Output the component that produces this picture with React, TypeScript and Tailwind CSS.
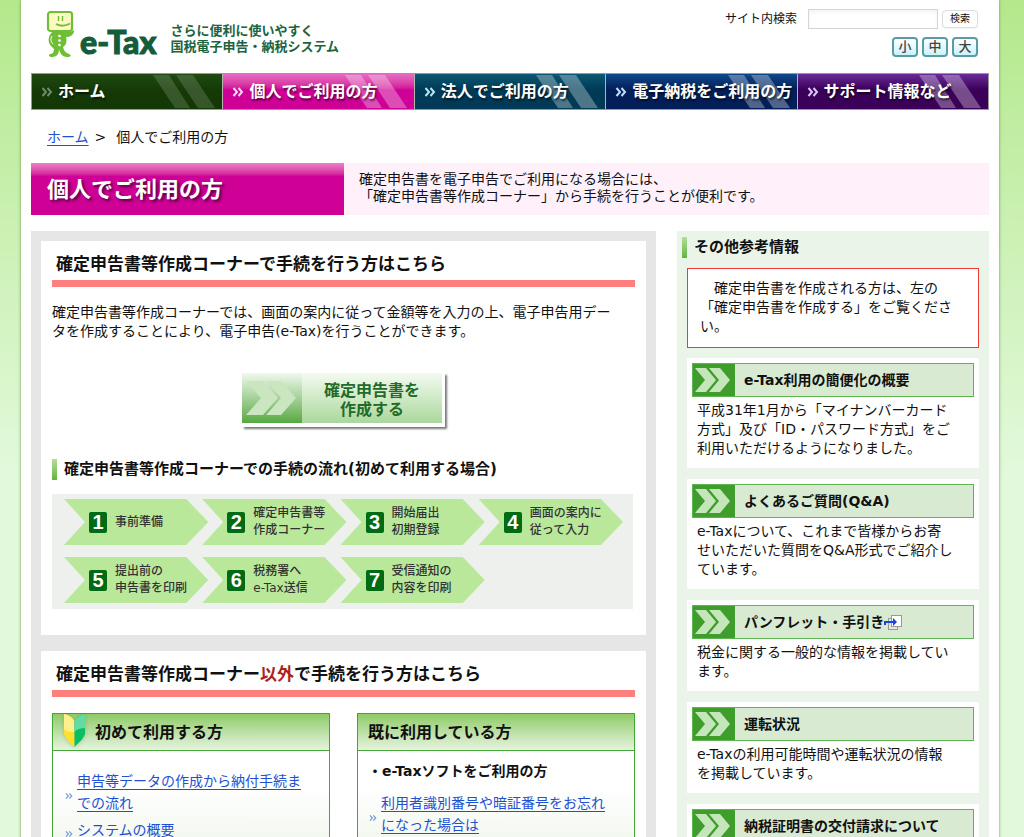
import type { ReactNode } from 'react';

const navItems = [
  { label: 'ホーム', color: 'bg-linear-to-b from-[#1f4a12] from-0% via-[#153a06] via-45% to-[#133805]', arrow: 'text-[#6f8a66]', stripe: 'opacity-15' },
  { label: '個人でご利用の方', color: 'bg-linear-to-b from-[#e66cc4] from-0% via-[#cf0096] via-45% to-[#cf0096]', arrow: 'text-[#ffd9f4]', stripe: 'opacity-30' },
  { label: '法人でご利用の方', color: 'bg-linear-to-b from-[#0d5873] from-0% via-[#003a56] via-45% to-[#003a56]', arrow: 'text-[#b9e6f5]', stripe: 'opacity-30' },
  { label: '電子納税をご利用の方', color: 'bg-linear-to-b from-[#11488c] from-0% via-[#041f57] via-45% to-[#041f57]', arrow: 'text-[#c4dcff]', stripe: 'opacity-30' },
  { label: 'サポート情報など', color: 'bg-linear-to-b from-[#6a2a9a] from-0% via-[#3b0058] via-45% to-[#3b0058]', arrow: 'text-[#d9c4ff]', stripe: 'opacity-30' },
];

const steps = [
  ['事前準備'],
  ['確定申告書等', '作成コーナー'],
  ['開始届出', '初期登録'],
  ['画面の案内に', '従って入力'],
  ['提出前の', '申告書を印刷'],
  ['税務署へ', 'e-Tax送信'],
  ['受信通知の', '内容を印刷'],
];

const infoCards = [
  {
    title: 'e-Tax利用の簡便化の概要',
    text: '平成31年1月から「マイナンバーカード方式」及び「ID・パスワード方式」をご利用いただけるようになりました。',
  },
  {
    title: 'よくあるご質問(Q&A)',
    text: 'e-Taxについて、これまで皆様からお寄せいただいた質問をQ&A形式でご紹介しています。',
  },
  {
    title: 'パンフレット・手引き',
    text: '税金に関する一般的な情報を掲載しています。',
    external: true,
  },
  {
    title: '運転状況',
    text: 'e-Taxの利用可能時間や運転状況の情報を掲載しています。',
  },
  {
    title: '納税証明書の交付請求について',
  },
];

function Mascot() {
  return (
    <svg width="30" height="49" viewBox="0 0 30 49" aria-hidden="true">
      <path
        d="M7 21 C2 26 1 33 6 37 L8 39 C8 43 6 44 4 44 C2 45 3 47 6 47 C11 47 13 44 13 39 C14 44 17 47 21 47 C25 47 26 45 23 44 C20 43 18 41 17 37 C21 35 21 29 20 27 C24 27 27 25 28 22 C29 20 27 20 25 22 L24 19 L22 22 L19 21 Z"
        fill="#6fbe35"
      />
      <path d="M5 24 C1 28 3 34 6 35 C5 30 6 27 8 25 Z" fill="#6fbe35" />
      <path d="M6 26 C4 29 5 32 7 34" fill="none" stroke="#fff" strokeWidth="1" />
      <circle cx="13.500" cy="26" r="1.300" fill="#fff" />
      <circle cx="13.500" cy="30.500" r="1.300" fill="#fff" />
      <circle cx="13.500" cy="35" r="1.300" fill="#fff" />
      <rect x="2" y="2" width="24" height="19" rx="2.500" fill="#fdf8c4" stroke="#6fbe35" strokeWidth="2.200" />
      <path d="M12.500 6 V11 M16.500 6 V11" stroke="#6fbe35" strokeWidth="1.400" />
      <path d="M10 14 C14 16.500 20 16 24 13.500" fill="none" stroke="#6fbe35" strokeWidth="2" />
    </svg>
  );
}

function DoubleAngle({ size }: { size: number }) {
  return (
    <svg width={size} height={size} viewBox="0 0 12 12" fill="none" stroke="currentColor" strokeWidth="2" aria-hidden="true">
      <path d="M1.500 2 L5 6 L1.500 10 M6.500 2 L10 6 L6.500 10" />
    </svg>
  );
}

function Chevrons() {
  return (
    <svg width="42" height="32" viewBox="0 0 42 32" fill="#c5e5bb" aria-hidden="true">
      <path d="M2 4 H13 L23 16 L13 28 H2 L12 16 Z" />
      <path d="M16 4 H27 L37 16 L27 28 H16 L26 16 Z" />
    </svg>
  );
}

function NewWindowIcon() {
  return (
    <svg width="18" height="15" viewBox="0 0 18 15" aria-hidden="true">
      <rect x="4.500" y="3.500" width="9" height="11" fill="#e6e6e6" stroke="#999" />
      <rect x="7.500" y="0.500" width="10" height="11" fill="#fff" stroke="#999" />
      <path d="M1 10 V7 H10" fill="none" stroke="#1747d8" strokeWidth="2" />
      <path d="M9 3 L13 7 L9 11 Z" fill="#1747d8" />
    </svg>
  );
}

function BeginnerMark() {
  return (
    <svg width="24" height="36" viewBox="0 0 24 36" className="drop-shadow-sm" aria-hidden="true">
      <path d="M1 0 C6 1 11 4 11.500 9 V33 C8 29 3 26 1 20 Z" fill="#ffe02c" />
      <path d="M1 0 C6 1 11 4 11.500 9 V18 C8 18 4 18 1 15 Z" fill="#fff08c" />
      <path d="M22 0 C17 1 12 4 11.500 9 V33 C15 29 20 26 22 20 Z" fill="#0abf62" />
      <path d="M22 0 C17 1 12 4 11.500 9 V18 C14 15 18 14 22 14 Z" fill="#63dba4" />
    </svg>
  );
}

function SectionTitle({ children }: { children: ReactNode }) {
  return (
    <h2 className="border-b-[7px] border-[#ff7e7e] pt-[2px] pl-1 pb-[3px] text-[17px] leading-[26px] font-bold">{children}</h2>
  );
}

function LinkItem({ children }: { children: ReactNode }) {
  return (
    <li className="flex items-center gap-1">
      <span className="mt-2 w-2 shrink-0 text-[#7d9ee0]">
        <DoubleAngle size={8} />
      </span>
      <a href="#" className="text-[#1e50d0] underline underline-offset-3">
        {children}
      </a>
    </li>
  );
}

export default function App() {
  return (
    <div className="min-h-screen bg-[#e3f9dc] bg-linear-to-b from-[#b4e88b] to-[#e3f9dc] to-[480px] pl-[21px] pr-[25px] font-['DejaVu_Sans','Noto_Sans_CJK_JP',sans-serif] text-[14px] leading-[19px] text-[#111]">
      <div className="min-h-screen bg-white px-[10px] shadow-[0_0_3px_#6a9a50]">
        <header className="flex h-[73px] items-start justify-between pr-[11px] pl-[15px]">
          <div className="flex pt-[10px]">
            <Mascot />
            <span className="mt-[14px] ml-1 font-['Lato'] text-[32px] leading-9 font-black text-[#155c38] [-webkit-text-stroke:1px_#155c38]">
              e-Tax
            </span>
            <p className="mt-[13px] ml-[14px] text-[13px] leading-4 font-bold text-[#1d6340]">
              さらに便利に使いやすく
              <br />
              国税電子申告・納税システム
            </p>
          </div>
          <div className="flex flex-col items-end pt-[9px]">
            <form className="flex items-center">
              <label htmlFor="site-search" className="mr-[11px] text-[12px]">
                サイト内検索
              </label>
              <input id="site-search" type="text" className="h-[20px] w-[130px] border border-[#d5d5d5] bg-white px-1 text-[12px] shadow-inner" />
              <button type="button" className="ml-1 h-[18px] w-9 rounded border border-[#ddd] bg-white text-[10px] leading-4 shadow-xs">
                検索
              </button>
            </form>
            <div className="mt-2 flex gap-1">
              {['小', '中', '大'].map((size) => (
                <button
                  key={size}
                  type="button"
                  className="h-5 w-[26px] rounded border-2 border-[#5a9ba5] bg-linear-to-b from-white to-[#c8f3fb] text-[13px] leading-4 font-medium text-[#444]"
                >
                  {size}
                </button>
              ))}
            </div>
          </div>
        </header>

        <nav className="grid grid-cols-5 gap-px border border-[#999] bg-[#b5b5b5]">
          {navItems.map((item) => (
            <a
              key={item.label}
              href="#"
              className={`relative flex h-[35px] items-center text-[16px] font-bold whitespace-nowrap text-white ${item.color}`}
            >
              <svg className={`absolute right-0 h-full ${item.stripe}`} width="72" height="35" viewBox="0 0 72 35" fill="#fff" aria-hidden="true">
                <path d="M3 1 H19 L40 34 H25 Z M26 1 H43 L65 34 H48 Z" />
              </svg>
              <span className={`relative ml-[9px] w-[17px] ${item.arrow}`}>
                <DoubleAngle size={12} />
              </span>
              <span className="relative [text-shadow:1px_2px_2px_#0009]">{item.label}</span>
            </a>
          ))}
        </nav>

        <div className="flex gap-[6px] pt-[18px] pb-4 pl-4">
          <a href="#" className="text-[#1e50d0] underline underline-offset-3">
            ホーム
          </a>
          <span>&gt;</span>
          <span className="ml-1">個人でご利用の方</span>
        </div>

        <div className="flex h-[52px] items-stretch bg-[#fff0fa]">
          <h1 className="flex w-[313px] shrink-0 items-center bg-linear-to-b from-[#eb7fcb] from-0% via-[#cf0096] via-25% to-[#cf0096] pl-4 text-[22px] font-bold text-white [text-shadow:2px_2px_3px_#0009]">
            個人でご利用の方
          </h1>
          <p className="pt-2 pl-[15px] leading-[17px]">
            確定申告書を電子申告でご利用になる場合には、
            <br />
            「確定申告書等作成コーナー」から手続を行うことが便利です。
          </p>
        </div>

        <div className="mt-4 flex items-stretch gap-[21px]">
          <main className="flex min-w-0 flex-1 flex-col gap-4 bg-[#e6e6e6] p-[10px]">
            <section className="bg-white px-[11px] pt-2 pb-[26px]">
              <SectionTitle>確定申告書等作成コーナーで手続を行う方はこちら</SectionTitle>
              <p className="mt-4 pr-4">
                確定申告書等作成コーナーでは、画面の案内に従って金額等を入力の上、電子申告用データを作成することにより、電子申告(e-Tax)を行うことができます。
              </p>
              <a
                href="#"
                className="mx-auto mt-8 flex h-[54px] w-[203px] border-r-3 border-b-4 border-white bg-linear-to-b from-[#f3faf0] to-[#abd89c] shadow-[2px_2px_2px_#777]"
              >
                <span className="flex w-[60px] shrink-0 items-center justify-center bg-linear-to-b from-[#f0f8ed] to-[#56a840]">
                  <svg width="54" height="36" viewBox="0 0 54 36" fill="#c9e6c0" aria-hidden="true">
                    <path d="M1 1 H18 L33 18 L18 35 H1 L16 18 Z" />
                    <path d="M21 1 H36 L51 18 L36 35 H21 L36 18 Z" />
                  </svg>
                </span>
                <span className="flex-1 pt-2 text-center text-[16px] leading-[19px] font-bold text-[#236b28]">
                  確定申告書を
                  <br />
                  作成する
                </span>
              </a>
              <h3 className="mt-8 flex h-[21px] items-center gap-[7px] text-[15px] font-bold">
                <span className="h-full w-[5px] bg-linear-to-b from-[#b4dd9a] to-[#62b53a]" />
                確定申告書等作成コーナーでの手続の流れ(初めて利用する場合)
              </h3>
              <ol className="mt-[14px] mr-[2px] grid grid-cols-4 gap-y-3 bg-[#eef0ed] pt-[5px] pr-4 pb-[6px] pl-3">
                {steps.map((lines, i) => (
                  <li
                    key={lines[0]}
                    className="-mr-[6px] flex h-[46px] items-center gap-2 bg-[#b9e89a] pl-[25px] text-[12px] leading-[17px] font-medium whitespace-nowrap text-[#333] [clip-path:polygon(0_0,calc(100%_-_22px)_0,100%_50%,calc(100%_-_22px)_100%,0_100%,21px_50%)]"
                  >
                    <span className="flex h-[21px] w-[18px] shrink-0 items-center justify-center rounded-xs bg-[#006a14] font-['Liberation_Sans'] text-[20px] font-bold text-white">
                      {i + 1}
                    </span>
                    <span>
                      {lines.map((line) => (
                        <span key={line} className="block">
                          {line}
                        </span>
                      ))}
                    </span>
                  </li>
                ))}
              </ol>
            </section>

            <section className="bg-white px-[11px] pt-2 pb-5">
              <SectionTitle>
                確定申告書等作成コーナー<span className="text-[#ab1f24]">以外</span>で手続を行う方はこちら
              </SectionTitle>
              <div className="mt-4 grid grid-cols-2 gap-[27px]">
                <div className="border border-[#43a735] bg-linear-to-b from-white from-50% to-[#eef6e8]">
                  <h3 className="flex h-[37px] items-center border-b border-[#43a735] bg-linear-to-b from-[#8fcb65] to-[#e6f3df] pl-[10px] text-[16px] font-bold">
                    <span className="mr-2 w-6">
                      <BeginnerMark />
                    </span>
                    初めて利用する方
                  </h3>
                  <ul className="space-y-[5px] px-3 pt-[19px] pr-5 pb-5 leading-[22px]">
                    <LinkItem>申告等データの作成から納付手続までの流れ</LinkItem>
                    <LinkItem>システムの概要</LinkItem>
                  </ul>
                </div>
                <div className="border border-[#43a735] bg-linear-to-b from-white from-50% to-[#eef6e8]">
                  <h3 className="flex h-[37px] items-center border-b border-[#43a735] bg-linear-to-b from-[#8fcb65] to-[#e6f3df] pl-[10px] text-[16px] font-bold">
                    既に利用している方
                  </h3>
                  <p className="pt-[11px] pl-[10px] font-bold">・e-Taxソフトをご利用の方</p>
                  <ul className="px-[11px] pt-[11px] pr-5 pb-5 leading-[22px]">
                    <LinkItem>利用者識別番号や暗証番号をお忘れになった場合は</LinkItem>
                  </ul>
                </div>
              </div>
            </section>
          </main>

          <aside className="w-[312px] shrink-0 bg-[#ebf4e8] px-[10px] pb-4">
            <h2 className="-ml-[5px] flex items-center gap-[7px] pt-[6px] text-[15px] font-bold">
              <span className="h-[21px] w-[5px] bg-linear-to-b from-[#b4dd9a] to-[#62b53a]" />
              その他参考情報
            </h2>
            <p className="mt-[10px] border border-[#f03a34] bg-white pt-[10px] pr-[14px] pb-[11px] pl-3">
              {'\u3000'}確定申告書を作成される方は、左の「確定申告書を作成する」をご覧ください。
            </p>
            <div className="mt-[10px] space-y-[11px]">
              {infoCards.map((card) => (
                <section key={card.title} className="bg-white px-[5px] pt-[5px] pb-[10px]">
                  <h3 className="flex h-[34px] items-center border border-[#5fb352] bg-[#d8ead2] font-bold">
                    <span className="mr-[9px] flex h-full items-center bg-[#3f9d2c]">
                      <Chevrons />
                    </span>
                    {card.title}
                    {card.external && <NewWindowIcon />}
                  </h3>
                  {card.text && <p className="mt-1 pr-5 pl-[5px]">{card.text}</p>}
                </section>
              ))}
            </div>
          </aside>
        </div>
      </div>
    </div>
  );
}
